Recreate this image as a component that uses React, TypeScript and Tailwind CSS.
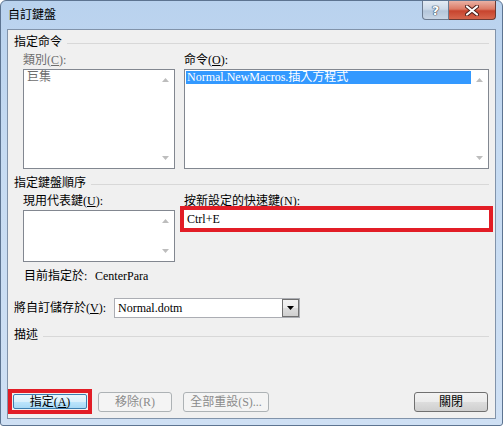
import React from "react"

const font = "font-['Liberation_Serif','Noto_Sans_CJK_TC',serif]"

const ScrollArrows = () => (
  <div className="flex w-[17px] flex-col items-center justify-between pt-[8px] pb-[8px]">
    <svg width="7" height="4" viewBox="0 0 7 4">
      <path d="M3.5 0 L7 4 L0 4 Z" fill="#bdbdbd" />
    </svg>
    <svg width="7" height="4" viewBox="0 0 7 4">
      <path d="M0 0 L7 0 L3.5 4 Z" fill="#bdbdbd" />
    </svg>
  </div>
)

const GroupHeader = ({ title }: { title: string }) => (
  <div className="flex items-center gap-[5px] pr-[6px] pl-[6px] leading-[14px]">
    <span>{title}</span>
    <div className="mt-[2px] h-px flex-1 bg-[#d8d8d8]" />
  </div>
)

const TitleButtons = () => (
  <div className="flex self-start">
    <div className="flex h-[19px] w-[27px] items-center justify-center rounded-bl-[4px] border border-t-0 border-[#6b7a8f] bg-[linear-gradient(#e3ebf4,#ccd9e8_45%,#b4c6da_55%,#c8d6e6)]">
      <span className="font-['DejaVu_Sans',sans-serif] text-[13px] leading-none font-bold text-white [text-shadow:0_0_1px_#2c3b4f,0_0_1px_#2c3b4f,0_0_1px_#2c3b4f]">
        ?
      </span>
    </div>
    <div className="flex h-[19px] w-[47px] items-center justify-center rounded-br-[4px] border border-t-0 border-l-0 border-[#6b3a34] bg-[linear-gradient(#eab1a4,#dc7a65_45%,#c7442e_55%,#d6664d)]">
      <svg width="14" height="11" viewBox="0 0 14 11">
        <path d="M2 1.5 L12 9.5 M12 1.5 L2 9.5" stroke="#4a1d18" strokeWidth="4" strokeLinecap="round" />
        <path d="M2 1.5 L12 9.5 M12 1.5 L2 9.5" stroke="#ffffff" strokeWidth="2.2" strokeLinecap="round" />
      </svg>
    </div>
  </div>
)

const App = () => {
  return (
    <div className={`${font} text-[12px] text-black`}>
      <div className="flex h-[426px] w-[503px] flex-col rounded-t-[6px] rounded-b-[3px] border border-[#5d7491] bg-[linear-gradient(180deg,#b9d2ee_0%,#c6dbf2_35%,#cfe0f4_100%)] px-[6px] pb-[6px]">
        <div className="flex h-[28px] items-center justify-between">
          <span className="pl-[1px] leading-[14px]">自訂鍵盤</span>
          <TitleButtons />
        </div>

        <div className="flex flex-1 flex-col border border-[#8193aa] bg-[#f0f0f0]">
          <div className="mt-[5px]">
            <GroupHeader title="指定命令" />
          </div>
          <div className="mt-[4px] ml-[15px] flex gap-[9px]">
            <div className="flex w-[152px] flex-col">
              <span className="leading-[14px] text-[#6d6d6d]">
                類別(<span className="underline">C</span>):
              </span>
              <div className="mt-[2px] flex h-[100px] border border-[#828790] bg-white">
                <div className="flex-1 pt-[1px]">
                  <div className="ml-[1px] pl-[2px] leading-[13px] text-[#6d6d6d]">巨集</div>
                </div>
                <ScrollArrows />
              </div>
            </div>
            <div className="flex w-[305px] flex-col">
              <span className="leading-[14px]">
                命令(<span className="underline">O</span>):
              </span>
              <div className="mt-[2px] flex h-[100px] border border-[#828790] bg-white">
                <div className="flex-1 pt-[1px]">
                  <div className="ml-[1px] bg-[#3399ff] pl-[1px] leading-[13px] text-white">
                    Normal.NewMacros.插入方程式
                  </div>
                </div>
                <ScrollArrows />
              </div>
            </div>
          </div>

          <div className="mt-[7px]">
            <GroupHeader title="指定鍵盤順序" />
          </div>
          <div className="mt-[4px] ml-[15px] flex gap-[9px]">
            <div className="flex w-[152px] flex-col">
              <span className="leading-[14px]">
                現用代表鍵(<span className="underline">U</span>):
              </span>
              <div className="mt-[2px] flex h-[52px] border border-[#828790] bg-white">
                <div className="flex-1" />
                <ScrollArrows />
              </div>
            </div>
            <div className="flex w-[305px] flex-col">
              <span className="leading-[14px]">
                按新設定的快速鍵(<span className="underline">N</span>):
              </span>
              <div className="-mt-[2px] -ml-[4px] h-[26px] w-[313px] border-4 border-[#e21d26]">
                <div className="flex h-full items-center bg-white pl-[3px] leading-[14px]">Ctrl+E</div>
              </div>
            </div>
          </div>

          <div className="mt-[7px] ml-[16px] flex leading-[14px]">
            <span className="w-[71px]">目前指定於:</span>
            <span>CenterPara</span>
          </div>

          <div className="mt-[15px] flex items-center pl-[6px]">
            <span className="w-[100px] leading-[14px]">
              將自訂儲存於(<span className="underline">V</span>):
            </span>
            <div className="flex h-[20px] w-[186px] border border-[#abadb3] bg-white">
              <div className="flex flex-1 items-center pl-[3px] leading-[14px]">Normal.dotm</div>
              <div className="flex w-[17px] items-center justify-center border border-[#707070] bg-[linear-gradient(#f2f2f2,#ebebeb_50%,#dddddd_50%,#cfcfcf)]">
                <svg width="7" height="4" viewBox="0 0 7 4">
                  <path d="M0 0 L7 0 L3.5 4 Z" fill="#000000" />
                </svg>
              </div>
            </div>
          </div>

          <div className="mt-[10px]">
            <GroupHeader title="描述" />
          </div>

          <div className="mt-auto flex items-center pr-[7px] pb-[4px]">
            <div className="h-[25px] w-[84px] border-4 border-[#e21d26] p-[1px]">
              <div className="flex h-full items-center justify-center rounded-[2px] border border-[#3c7fb1] bg-[linear-gradient(#eaf6fd,#d9f0fc_50%,#bee6fd_50%,#a7d9f5)] leading-[14px]">
                指定(<span className="underline">A</span>)
              </div>
            </div>
            <div className="ml-[6px] flex h-[20px] w-[74px] items-center justify-center rounded-[3px] border border-[#adb2b5] bg-[#f4f4f4] leading-[14px] text-[#8b8b8b]">
              移除(R)
            </div>
            <div className="ml-[11px] flex h-[20px] w-[86px] items-center justify-center rounded-[3px] border border-[#adb2b5] bg-[#f4f4f4] leading-[14px] text-[#8b8b8b]">
              全部重設(S)...
            </div>
            <div className="ml-auto flex h-[20px] w-[74px] items-center justify-center rounded-[3px] border border-[#707070] bg-[linear-gradient(#f2f2f2,#ebebeb_50%,#dddddd_50%,#cfcfcf)] leading-[14px]">
              關閉
            </div>
          </div>
        </div>
      </div>
    </div>
  )
}

export default App
